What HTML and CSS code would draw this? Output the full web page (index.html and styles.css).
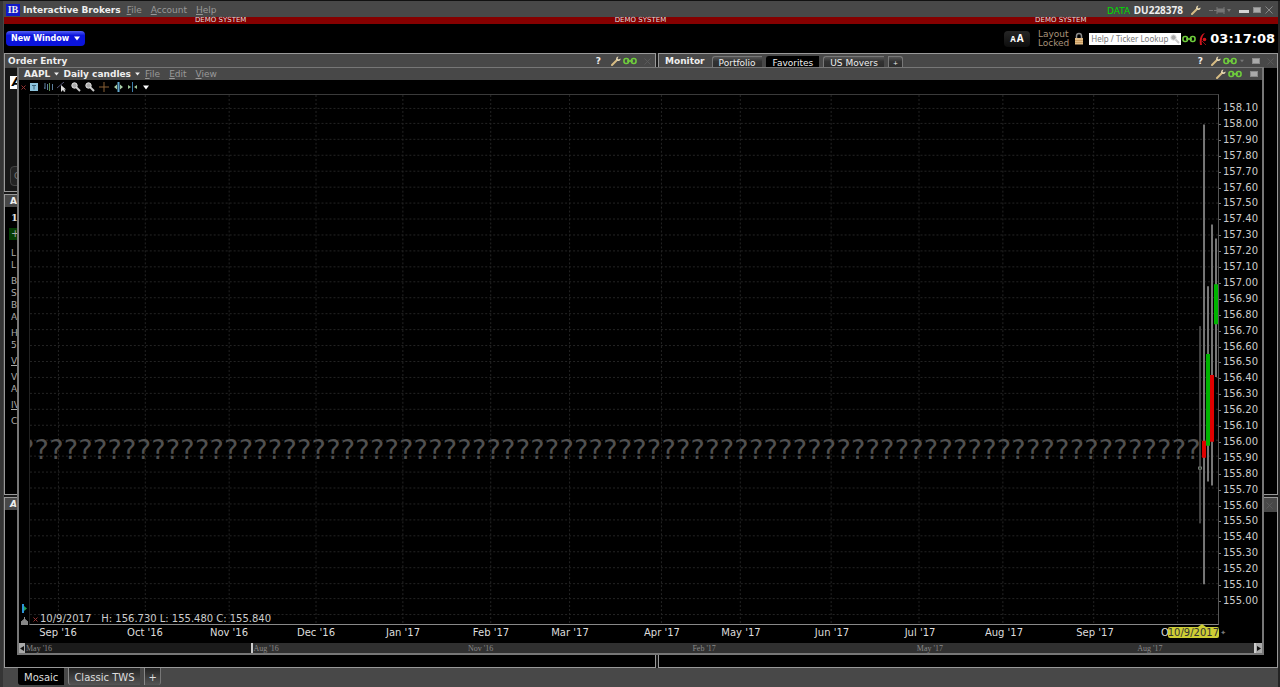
FILE: index.html
```html
<!DOCTYPE html>
<html lang="en">
<head>
<meta charset="utf-8">
<title>Interactive Brokers</title>
<link rel="stylesheet" href="styles.css">
</head>
<body>
<svg class="defs" aria-hidden="true">
  <symbol id="wrench" viewBox="0 0 10 10"><path d="M1 9 L6 4" stroke="#d8bd84" stroke-width="2" stroke-linecap="round"/><path d="M7.500 0.500 L6.500 2.500 L7.500 3.500 L9.600 2.500 C9.600 4.800 8 5.300 6.400 4.800 L5 3.700 C5 1.500 6 0.500 7.500 0.500Z" fill="#e8d9b4"/></symbol>
  <symbol id="link" viewBox="0 0 14 8"><g fill="none" stroke="#6fce3c" stroke-width="1.600"><rect x="1" y="1.500" width="4.500" height="5" rx="2"/><rect x="8.500" y="1.500" width="4.500" height="5" rx="2"/><path d="M4 4H10"/></g></symbol>
  <symbol id="square" viewBox="0 0 8 6"><rect x="0.500" y="0.500" width="7" height="5" fill="#aaa" stroke="#8a8a8a"/></symbol>
  <symbol id="cross" viewBox="0 0 8 8"><path d="M0.500 0.500L7.500 7.500M7.500 0.500L0.500 7.500" stroke="currentColor" fill="none"/></symbol>
  <symbol id="down" viewBox="0 0 6 5"><path d="M0 0.500H6L3 4.500Z" fill="currentColor"/></symbol>
  <symbol id="lens" viewBox="0 0 10 10"><path d="M5 5L9 9" stroke="#c9c9c9" stroke-width="2"/><circle cx="3.500" cy="3.500" r="2.700" fill="#aaa" stroke="#e2e2e2"/></symbol>
</svg>
<header class="titlebar">
  <span class="logo">IB</span>
  <h1>Interactive Brokers</h1>
  <nav class="menu"><button><u>F</u>ile</button><button><u>A</u>ccount</button><button><u>H</u>elp</button></nav>
  <div class="account"><span class="data">DATA</span> <span>DU228378</span></div>
  <div class="window-tools">
    <button aria-label="Settings"><svg width="10" height="10"><use href="#wrench"/></svg></button>
    <button aria-label="Pin" class="pin"><svg width="22" height="9" viewBox="0 0 22 9"><path d="M0 4.500H4M5 4.500H8M8 1V8M8 3H15V6H8M15 1V8" stroke="#777" fill="#777"/><path d="M18 3H22L20 6Z" fill="#777"/></svg></button>
    <button aria-label="Minimize"><svg width="10" height="8"><rect y="4" width="10" height="3" fill="#d5d5d5"/></svg></button>
    <button aria-label="Maximize"><svg width="8" height="6"><use href="#square"/></svg></button>
    <button aria-label="Close"><svg width="8" height="8"><use href="#cross"/></svg></button>
  </div>
</header>
<div class="demo"><span>DEMO SYSTEM</span><span>DEMO SYSTEM</span><span>DEMO SYSTEM</span></div>
<div class="toolbar">
  <button class="new-window">New Window <svg width="6" height="5"><use href="#down"/></svg></button>
  <div class="tools">
    <button class="font-size" aria-label="Font size"><small>A</small>A</button>
    <span class="locked">Layout<br>Locked</span>
    <svg class="lock" width="10" height="14" viewBox="0 0 10 14"><path d="M2.500 7V4C2.500 0.500 7.500 0.500 7.500 4V7" fill="none" stroke="#8d8d8d" stroke-width="1.500"/><rect x="1" y="6" width="8" height="6.500" fill="#e3bd87"/><path d="M1 8.500H9M1 10.500H9" stroke="#c89b60"/></svg>
    <label class="lookup"><input type="text" aria-label="Help / Ticker Lookup" placeholder="Help / Ticker Lookup"><svg width="10" height="10"><use href="#lens"/></svg></label>
    <svg width="14" height="8"><use href="#link"/></svg>
    <svg class="signal" width="8" height="14" viewBox="0 0 8 14"><path d="M6 1C2 2 0 6 1 13H3C2 9 3 4 6 1Z" fill="#d4141c"/><circle cx="5.500" cy="7.500" r="1.800" fill="#d4141c"/><path d="M3 9L7 13" stroke="#8d1015"/></svg>
    <time>03:17:08</time>
  </div>
</div>
<main class="desktop">
  <div class="column left">
    <section class="panel order">
      <header class="panel-head"><h2>Order Entry</h2>
        <div class="icons"><span>?</span><svg width="10" height="10"><use href="#wrench"/></svg><svg width="14" height="8"><use href="#link"/></svg><svg class="dim" width="7" height="7"><use href="#cross"/></svg></div>
      </header>
      <div class="order-body"><span class="ticker">A</span><span class="order-button">C</span></div>
    </section>
    <section class="panel quote">
      <header class="panel-head"><h2>A</h2></header>
      <div class="quote-body">
        <b>1</b><button class="plus">+</button>
        <p>L<br>L</p><p>B<br>S<br>B<br>A</p><p>H<br>5</p><p><u>V</u></p><p>V<br>A</p><p><u>IV</u></p><p>C</p>
      </div>
    </section>
    <section class="panel activity"><header class="panel-head"><h2><i>A</i></h2></header></section>
  </div>
  <div class="column right">
    <section class="panel monitor">
      <header class="panel-head"><h2>Monitor</h2>
        <nav class="tabs"><button>Portfolio</button><button class="active">Favorites</button><button>US Movers</button><button class="add">+</button></nav>
        <div class="icons"><span>?</span><svg width="10" height="10"><use href="#wrench"/></svg><svg width="14" height="8"><use href="#link"/></svg><svg class="arrow" width="4" height="4"><use href="#down"/></svg><svg class="max" width="8" height="6"><use href="#square"/></svg><svg class="dim" width="7" height="7"><use href="#cross"/></svg></div>
      </header>
    </section>
    <section class="panel lower"><header class="panel-head"><div class="icons"><svg class="dim" width="7" height="7"><use href="#cross"/></svg></div></header></section>
  </div>
  <section class="chart-window">
    <header class="chart-head">
      <button class="bold">AAPL <svg width="5" height="4"><use href="#down"/></svg></button>
      <button class="bold">Daily candles <svg width="5" height="4"><use href="#down"/></svg></button>
      <nav class="menu"><button><u>F</u>ile</button><button><u>E</u>dit</button><button><u>V</u>iew</button></nav>
      <div class="icons"><svg width="10" height="10"><use href="#wrench"/></svg><svg width="14" height="8"><use href="#link"/></svg><svg class="max" width="8" height="6"><use href="#square"/></svg></div>
    </header>
    <div class="chart-tools">
      <svg class="red" width="5" height="5" viewBox="0 0 5 5"><path d="M0.500 0.500L4.500 4.500M4.500 0.500L0.500 4.500" stroke="#933"/></svg>
      <svg width="8" height="8"><rect width="8" height="8" fill="#8cc3dc"/><path d="M2 2.500H6M4 2V6.500" stroke="#37627a"/></svg>
      <svg width="9" height="10"><path d="M1 1V7M0 6H1M3.500 2V8M8.500 2V8" stroke="#5c7fa0"/><path d="M5.500 1V9" stroke="#5d8f55"/></svg>
      <svg width="10" height="10"><path d="M0 6L7 0" stroke="#557"/><path d="M4 3V10L6 8L7 10L8.500 9L7 7.500H9Z" fill="#ddd"/></svg>
      <svg width="10" height="10"><use href="#lens"/></svg>
      <svg width="10" height="10"><use href="#lens"/></svg>
      <svg width="10" height="10"><path d="M5 0V10M0 5H10" stroke="#8a6035"/></svg>
      <svg width="9" height="10"><path d="M4.500 0V10" stroke="#62a9cf" stroke-width="2"/><path d="M3 2.500V7.500L0 5ZM6 2.500V7.500L9 5Z" fill="#a9cda6"/></svg>
      <svg width="9" height="10"><path d="M4.500 0V10" stroke="#3d7fae"/><path d="M0 3V7L3 5ZM9 3V7L6 5Z" fill="#9ac296"/></svg>
      <svg class="white" width="6" height="5"><use href="#down"/></svg>
    </div>
    <div class="chart">
      <div class="gutter"><svg width="5" height="9"><path d="M1 0V9" stroke="#2d94d8" stroke-width="2"/><path d="M2 2L5 4.500L2 7Z" fill="#1fa254"/></svg><svg width="7" height="8"><path d="M0 8V5L3.500 2L7 5V8ZM3.500 0V4" fill="#888" stroke="#888"/></svg></div>
      <div class="plot">
        <svg class="canvas" viewBox="0 0 1190 531" preserveAspectRatio="none">
          <g id="grid" class="grid"></g>
          <g class="wick"><path class="faint" d="M1172 232V430"/><path d="M1176 29.500V491M1180 192V388M1184 130V392M1188 144V283"/></g>
          <g class="up"><path d="M1180 260V352M1188 190V230"/></g>
          <g class="fall"><path d="M1176 347V364M1184 281V348"/></g>
          <rect x="1170.500" y="373.500" width="3" height="2" fill="#063006" stroke="#777"/>
        </svg>
        <div id="missing" class="missing"></div>
        <div class="legend"><svg class="red" width="5" height="5" viewBox="0 0 5 5"><path d="M0.500 0.500L4.500 4.500M4.500 0.500L0.500 4.500" stroke="#933"/></svg><span>10/9/2017</span><span class="values"><span>H: 156.730</span><span>L: 155.480</span><span>C: 155.840</span></span></div>
      </div>
      <div id="prices" class="prices"></div>
      <div class="months"><div id="months" class="month-scale"><span class="current">10/9/2017</span></div><span class="spark">✦</span></div>
    </div>
    <div class="timeline">
      <button aria-label="Scroll left"><svg width="4" height="5"><path d="M4 0V5L0 2.500Z" fill="#111"/></svg></button>
      <div class="range"><div class="before"><span>May '16</span></div><div class="selected"><span>Aug '16</span><span>Nov '16</span><span>Feb '17</span><span>May '17</span><span>Aug '17</span></div></div>
      <button aria-label="Scroll right"><svg width="4" height="5"><path d="M0 0V5L4 2.500Z" fill="#111"/></svg></button>
    </div>
  </section>
</main>
<footer class="layouts"><button class="active">Mosaic</button><button>Classic TWS</button><button class="add">+</button></footer>
<script src="chart.js"></script>
</body>
</html>
```
FILE: styles.css
```css
* { box-sizing: border-box; }
body { margin: 0; height: 100vh; display: flex; flex-direction: column; padding: 2px 2px 0 4px; background: #484848; border-top: 1px solid #111; color: #ddd; font: 9px/12px "DejaVu Sans", sans-serif; overflow: hidden; box-shadow: inset 3px 0 #353535, inset -2px 0 #242424; }
button { font: inherit; color: inherit; background: none; border: 0; padding: 0; margin: 0; white-space: nowrap; }
h1, h2, p { margin: 0; font-size: inherit; }
svg { flex: none; }
.defs { position: absolute; width: 0; height: 0; }
.titlebar { display: flex; align-items: center; height: 14px; color: #eee; flex: none; }
.logo { width: 14px; margin-left: 2px; background: #1018c8; font: bold 10px/12px "Liberation Serif", serif; text-align: center; }
.titlebar h1 { margin-left: 3px; }
.menu { display: flex; gap: 9px; color: #999; margin-left: 6px; }
.account { margin-left: auto; font: bold 10px/12px "Noto Sans", sans-serif; }
.data { color: #0d0; margin-right: 1px; font: 9px/12px "DejaVu Sans", sans-serif; }
.window-tools { display: flex; align-items: center; gap: 4px; margin: 0 5px 0 8px; color: #888; }
.window-tools button { display: flex; }
.pin { margin: 0 4px; }
.demo { display: grid; grid-template-columns: 432fr 405fr 433fr; height: 7px; background: #850000; color: #ddd; font-size: 7px; line-height: 7px; text-align: center; flex: none; }
.toolbar { display: flex; align-items: center; justify-content: space-between; height: 29px; background: #000; padding: 0 3px 0 2px; flex: none; }
.new-window { display: flex; align-items: center; gap: 5px; height: 15px; padding: 0 5px; border-radius: 4px; background: linear-gradient(#5360f4, #0b14dc 30%, #0b14dc); color: #fff; font-size: 8px; font-weight: bold; }
.tools { display: flex; align-items: center; }
.font-size { width: 26px; height: 16px; border-radius: 4px; background: linear-gradient(#262626, #0d0d0d); color: #fff; font: bold 10px/12px "Noto Sans", sans-serif; margin-right: 8px; }
.font-size small { font-size: 8px; margin-right: 1px; }
.locked { color: #a8927a; line-height: 9px; }
.lock { margin: 0 5px 0 5px; }
.lookup { display: flex; align-items: center; width: 92px; height: 12px; background: #fff; margin-right: 1px; padding: 0 1px 0 2px; }
.lookup input { flex: 1; min-width: 0; height: 12px; border: 0; padding: 0; background: none; font: 8px/12px "Noto Sans", sans-serif; }
.lookup input::placeholder { color: #777; }
.signal { margin: 0 3px 0 3px; }
time { color: #fff; font-size: 13px; font-weight: bold; line-height: 16px; }
.desktop { position: relative; flex: 1; min-height: 0; display: grid; grid-template: minmax(0, 1fr) / 652fr 620fr; gap: 2px; background: #181818; }
.column { display: grid; gap: 2px; min-width: 0; min-height: 0; }
.left { grid-template-rows: minmax(0, 139fr) minmax(0, 301fr) minmax(0, 171fr); }
.right { grid-template-rows: minmax(0, 442fr) minmax(0, 171fr); }
.panel { border: 1px solid #999; background: #000; overflow: hidden; min-height: 0; }
.panel-head { display: flex; align-items: center; height: 14px; background: #484848; padding: 0 4px 0 3px; color: #eee; }
.panel-head .icons, .chart-head .icons { margin-left: auto; }
.icons { display: flex; align-items: center; }
.icons span { margin-right: 8px; font-weight: bold; }
.icons svg + svg { margin-left: 2px; }
.icons svg.dim { color: #5b5b5b; margin-left: 7px; }
.icons svg.arrow { color: #777; margin-left: 3px; }
.icons svg.max { margin-left: 8px; }
.order .icons span { margin-right: 10px; }
.monitor .panel-head { padding-left: 6px; padding-right: 3px; }
.tabs { display: flex; align-self: stretch; gap: 4px; margin-left: 7px; padding-top: 2px; }
.tabs button { padding: 0 6px; background: linear-gradient(#555, #333 40%, #2c2c2c); border: 1px solid #777; border-width: 1px 0 0 1px; border-radius: 3px 0 0; }
.tabs button.active { background: #000; border-color: #000; }
.tabs button.add { font-size: 6px; padding: 0 4px; border-radius: 0 3px 0 0; border-right-width: 1px; }
.order-body { height: 100%; padding: 8px 5px; background: #161616; }
.ticker { display: block; width: 60px; height: 13px; background: #fff; color: #000; font: italic bold 12px/13px "DejaVu Sans", sans-serif; padding-left: 2px; }
.order-button { display: block; width: 60px; height: 20px; margin-top: 77px; padding: 3px; border: 1px solid #444; border-radius: 4px; color: #777; background: #222; }
.quote .panel-head, .activity .panel-head { padding-left: 5px; height: 12px; }
.quote-body { display: flex; flex-direction: column; gap: 4px; padding: 5px 4px; color: #aaa; font-size: 9px; }
.quote-body b { font: bold 10px/12px "DejaVu Serif", serif; padding-left: 2px; color: #ddd; }
.quote-body .plus { width: 40px; height: 12px; background: #033c03; font-size: 10px; text-align: left; padding-left: 2px; margin-bottom: 3px; }
.quote-body p { padding-left: 2px; }
.chart-window { position: absolute; inset: 14px 14px 13px 13px; display: flex; flex-direction: column; background: #000; border: 2px solid #777; border-width: 1px 2px; overflow: hidden; }
.chart-head { display: flex; align-items: center; height: 12px; background: #484848; color: #eee; padding: 0 4px 0 5px; flex: none; }
.chart-head .bold { font-weight: bold; margin-right: 4px; }
.chart-head .bold svg { margin: 0 0 1px 1px; }
.chart-head .menu { margin-left: 1px; }
.chart-tools { display: grid; grid-template-columns: 8px repeat(9, 14px); align-items: center; justify-items: center; height: 14px; padding-left: 0; flex: none; }
.red { margin-top: 1px; }
.white { color: #fff; }
.chart { flex: 1; min-height: 0; display: grid; grid-template: minmax(0, 1fr) 18px / 10px minmax(0, 1fr) 43px; font-size: 10px; }
.gutter { display: flex; flex-direction: column; justify-content: flex-end; align-items: center; gap: 4px; }
.plot { position: relative; min-width: 0; min-height: 0; overflow: hidden; border: 1px solid #333; border-color: #3a3a3a #555 #888 #222; }
.canvas { position: absolute; inset: 0 0 0 0; width: 100%; height: 100%; overflow: visible; }
.grid { stroke: #242424; stroke-dasharray: 2 2; fill: none; }
.wick { stroke: #777; stroke-width: 2; }
.wick .faint { stroke: #444; }
.up { stroke: #00b400; stroke-width: 4; }
.fall { stroke: #e00000; stroke-width: 4; }
.missing { position: absolute; left: -10px; right: 17px; top: 64%; display: flex; justify-content: space-between; font-size: 27px; line-height: 32px; color: #505050; }
.legend { position: absolute; left: 3px; bottom: -1px; display: flex; align-items: center; gap: 2px; color: #ccc; }
.values { display: flex; gap: 3px; margin-left: 8px; }
.prices { position: relative; color: #ccc; }
.prices span { position: absolute; left: 4px; transform: translateY(-50%); }
.prices span::before { content: ""; position: absolute; left: -4px; top: 6px; width: 2px; height: 1px; background: #777; }
.months { position: relative; grid-column: 2 / 4; display: flex; }
.month-scale { position: relative; flex: 1; margin-right: 43px; }
.month-scale span { position: absolute; top: 2px; transform: translateX(-50%); white-space: nowrap; }
.month-scale .current { left: auto; right: 0; transform: none; background: #cdcd35; color: #333; border-radius: 2px; z-index: 1; line-height: 11px; }
.month-scale .current::before { content: ""; position: absolute; left: 30px; top: -3px; border: 4px solid transparent; border-top: 0; border-bottom: 3px solid #cdcd35; }
.spark { position: absolute; right: 36px; top: 2px; color: #777; font-size: 7px; }
.timeline { display: flex; height: 11px; border-bottom: 1px solid #777; background: #1b1b1b; flex: none; }
.timeline button { width: 6px; background: #aaa; display: flex; align-items: center; justify-content: center; }
.range { flex: 1; display: flex; font: 8px/11px "Liberation Serif", serif; color: #888; }
.before { flex: 226; padding-left: 1px; }
.selected { flex: 1003; display: grid; grid-template-columns: 215fr 225fr 225fr 221fr 117fr; background: #303030; border: 2px solid #ccc; border-width: 0 2px; }
.layouts { display: flex; align-items: flex-start; gap: 4px; height: 19px; padding-left: 14px; font-size: 10px; color: #ddd; flex: none; }
.layouts button { height: 17px; padding: 0 6px 0 5px; line-height: 19px; background: linear-gradient(#222, #555); border-left: 1px solid #888; border-radius: 0 0 0 3px; }
.layouts button.active { background: #000; border-color: #000; }
.layouts button.add { padding: 0 3px; border-radius: 0 0 3px 0; border-right: 1px solid #777; }
```
FILE: chart.js
```js
const WIDTH = 1190, HEIGHT = 531;
const months = [
  ["Sep '16", 29], ["Oct '16", 116], ["Nov '16", 200], ["Dec '16", 287],
  ["Jan '17", 374], ["Feb '17", 462], ["Mar '17", 541], ["Apr '17", 633],
  ["May '17", 712], ["Jun '17", 803], ["Jul '17", 891], ["Aug '17", 975],
  ["Sep '17", 1066], ["Oct '17", 1150]
];
const add = (id, text) => {
  const el = document.createElement("span");
  el.textContent = text;
  document.getElementById(id).append(el);
  return el;
};
let path = "";
for (let i = 0; i <= 32; i++) {
  const y = 14 + i * 15.9;
  path += `M0 ${Math.floor(y) - 0.5}H${WIDTH}`;
  if (i < 32) add("prices", (158.1 - i / 10).toFixed(2)).style.top = y / HEIGHT * 100 + "%";
}
for (const [name, x] of months) {
  path += `M${x - 0.5} 0V${HEIGHT}`;
  add("months", name).style.left = x / WIDTH * 100 + "%";
}
const lines = document.createElementNS("http://www.w3.org/2000/svg", "path");
lines.setAttribute("d", path);
document.getElementById("grid").append(lines);
for (let i = 0; i < 81; i++) add("missing", "?");
```
